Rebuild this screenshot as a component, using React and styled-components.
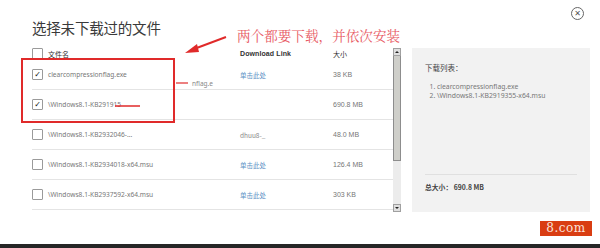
import React from "react"
import styled, { createGlobalStyle } from "styled-components"

const GlobalStyle = createGlobalStyle`
  html, body {
    margin: 0;
    padding: 0;
    background: #fff;
  }
  body {
    font-family: "Noto Sans", "Noto Sans CJK SC", sans-serif;
    color: #333;
  }
`

const Dialog = styled.div`
  position: relative;
  width: 600px;
  height: 248px;
  overflow: hidden;
  display: flex;
  flex-direction: column;
  background: #fff;
`

const Title = styled.h2`
  margin: 17px 0 0 32px;
  font-family: "Noto Sans CJK SC", sans-serif;
  font-weight: 400;
  font-size: 14.5px;
  line-height: 22px;
  color: #3a3a3a;
  letter-spacing: -0.2px;
`

const CloseButton = styled.div`
  position: absolute;
  top: 7px;
  left: 571px;
  width: 11px;
  height: 11px;
  border: 1px solid #666;
  border-radius: 50%;
  display: flex;
  align-items: center;
  justify-content: center;
  font-family: "DejaVu Sans", sans-serif;
  font-size: 8px;
  line-height: 1;
  color: #555;
`

const Main = styled.div`
  display: flex;
  margin-top: 8px;
  padding-left: 32px;
  gap: 11px;
`

const TableWrap = styled.div`
  display: flex;
  width: 369px;
`

const Table = styled.div`
  width: 361px;
  display: flex;
  flex-direction: column;
`

const HeadRow = styled.div`
  display: grid;
  grid-template-columns: 208px 93px 1fr;
  align-items: center;
  height: 13px;
  font-size: 7px;
  color: #333;
`

const Row = styled.div`
  display: grid;
  grid-template-columns: 208px 93px 1fr;
  align-items: center;
  height: 29px;
  border-bottom: 1px solid #e4e4e4;
  font-size: 6.6px;
  color: #777;
  &:first-of-type {
    border-top: 1px solid #e4e4e4;
  }
`

const NameCell = styled.div`
  display: flex;
  align-items: center;
  gap: 5px;
  white-space: nowrap;
`

const LinkHead = styled.div`
  font-family: "Liberation Sans", sans-serif;
  font-weight: 700;
  font-size: 7px;
  letter-spacing: 0.1px;
  color: #333;
`

const Link = styled.div`
  font-family: "Noto Sans CJK SC", sans-serif;
  color: ${p => (p.$muted ? "#888" : "#5b8fc4")};
  font-size: 6.5px;
`

const Size = styled.div`
  font-family: "Liberation Sans", sans-serif;
  color: #777;
  font-size: 7px;
`

const Box = styled.span`
  width: 9px;
  height: 9px;
  border: 1px solid #9a9a9a;
  border-radius: 1px;
  background: #fff;
  display: inline-flex;
  align-items: center;
  justify-content: center;
  flex: none;
  font-family: "DejaVu Sans", sans-serif;
  font-size: 8px;
  line-height: 1;
  font-weight: 700;
  color: #111;
`

const Scrollbar = styled.div`
  width: 8px;
  height: 164px;
  margin-top: 1px;
  background: #ececec;
  display: flex;
  flex-direction: column;
  align-items: stretch;
`

const ScrollArrow = styled.div`
  height: 6px;
  background: #e0e0e0;
  border: 1px solid #a0a0a0;
  display: flex;
  align-items: center;
  justify-content: center;
  &::after {
    content: "";
    border-left: 2px solid transparent;
    border-right: 2px solid transparent;
    ${p => (p.$down ? "border-top: 2px solid #222;" : "border-bottom: 2px solid #222;")}
  }
`

const Thumb = styled.div`
  height: 104px;
  background: #cfcfca;
  border: 1px solid #8d8d8d;
  border-top: none;
`

const Track = styled.div`
  flex: 1;
`

const Panel = styled.div`
  width: 178px;
  height: 164px;
  margin-top: 1px;
  background: #f2f2f2;
  padding: 14px 13px 0;
  box-sizing: border-box;
  display: flex;
  flex-direction: column;
  font-size: 6.8px;
  color: #666;
`

const PanelTitle = styled.div`
  font-family: "Noto Sans CJK SC", sans-serif;
  font-size: 7.5px;
  color: #444;
`

const List = styled.ol`
  margin: 9px 0 0;
  padding-left: 12px;
  line-height: 9px;
  color: #777;
`

const Total = styled.div`
  margin-top: auto;
  margin-bottom: 20px;
  padding-top: 7px;
  border-top: 1px solid #e0e0e0;
  font-family: "Noto Sans CJK SC", sans-serif;
  font-weight: 700;
  font-size: 6.8px;
  color: #444;
`

const Footer = styled.div`
  display: flex;
  justify-content: flex-end;
  padding-right: 8px;
  margin-top: 9px;
`

const RedButton = styled.div`
  width: 52px;
  height: 15px;
  background: #d93d12;
  color: #fbe3da;
  font-family: "DejaVu Serif", serif;
  font-size: 12px;
  line-height: 15px;
  text-align: center;
  letter-spacing: 0.5px;
`

const BottomBar = styled.div`
  margin-top: auto;
  height: 4px;
  background: #262626;
`

const Note = styled.div`
  position: absolute;
  left: 237px;
  top: 25px;
  font-family: "Noto Serif CJK SC", "Noto Sans CJK SC", serif;
  font-size: 13.6px;
  color: #e85a64;
  white-space: nowrap;
`

const Mark = styled.div`
  position: absolute;
  left: 21px;
  top: 58px;
  width: 150px;
  height: 61px;
  border: 2px solid #e02a2a;
`

const Overlay = styled.svg`
  position: absolute;
  left: 0;
  top: 0;
  pointer-events: none;
`

const files = [
  { name: "clearcompressionflag.exe", link: "单击此处", size: "38 KB", checked: true },
  { name: "\\Windows8.1-KB291915", link: "", size: "690.8 MB", checked: true },
  { name: "\\Windows8.1-KB2932046-...", link: "dhuu8-_", muted: true, size: "48.0 MB" },
  { name: "\\Windows8.1-KB2934018-x64.msu", link: "单击此处", size: "126.4 MB" },
  { name: "\\Windows8.1-KB2937592-x64.msu", link: "单击此处", size: "303 KB" },
]

export default function App() {
  return (
    <Dialog>
      <GlobalStyle />
      <Title>选择未下载过的文件</Title>
      <CloseButton>✕</CloseButton>
      <Main>
        <TableWrap>
          <Table>
            <HeadRow>
              <NameCell>
                <Box />
                <span style={{ fontFamily: "Noto Sans CJK SC" }}>文件名</span>
              </NameCell>
              <LinkHead>Download Link</LinkHead>
              <div style={{ fontFamily: "Noto Sans CJK SC" }}>大小</div>
            </HeadRow>
            {files.map(f => (
              <Row key={f.name}>
                <NameCell>
                  <Box>{f.checked ? "✓" : ""}</Box>
                  {f.name}
                </NameCell>
                <Link $muted={f.muted}>{f.link}</Link>
                <Size>{f.size}</Size>
              </Row>
            ))}
          </Table>
          <Scrollbar>
            <ScrollArrow />
            <Thumb />
            <Track />
            <ScrollArrow $down />
          </Scrollbar>
        </TableWrap>
        <Panel>
          <PanelTitle>下载列表：</PanelTitle>
          <List>
            <li>clearcompressionflag.exe</li>
            <li>\Windows8.1-KB2919355-x64.msu</li>
          </List>
          <Total>总大小： 690.8 MB</Total>
        </Panel>
      </Main>
      <Footer>
        <RedButton>8.com</RedButton>
      </Footer>
      <BottomBar />

      <Mark />
      <Note>两个都要下载，并依次安装</Note>
      <Overlay width="600" height="248">
        <line x1="226" y1="37" x2="194" y2="49" stroke="#e02a2a" strokeWidth="2" />
        <polygon points="185,53 197,44 199,52" fill="#e02a2a" />
        <line x1="115" y1="106" x2="140" y2="106" stroke="#e02a2a" strokeWidth="1.5" />
        <line x1="176" y1="83" x2="188" y2="83" stroke="#e02a2a" strokeWidth="1.2" />
        <text x="192" y="86" fontSize="6.5" fill="#888" fontFamily="Noto Sans">nflag.e</text>
      </Overlay>
    </Dialog>
  )
}
